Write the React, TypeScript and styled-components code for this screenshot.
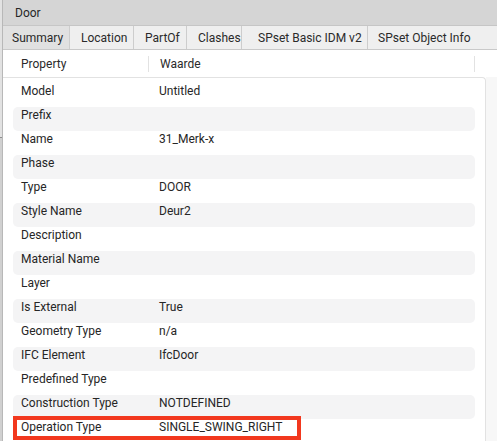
import React from "react";
import styled, { createGlobalStyle } from "styled-components";

const GlobalStyle = createGlobalStyle`
  html, body { margin: 0; padding: 0; background: #ffffff; }
  body {
    font-family: Roboto, "Liberation Sans", Arial, sans-serif;
    font-size: 12px;
    color: #262626;
  }
  * { box-sizing: border-box; }
`;

const Screen = styled.div`
  display: flex;
  width: 497px;
  height: 441px;
  overflow: hidden;
`;

const LeftEdge = styled.div`
  width: 3px;
  flex: none;
  border-right: 1px solid #b8b8b8;
  background: linear-gradient(
    to bottom,
    #e2e2e2 0,
    #e2e2e2 137px,
    #8e8e8e 137px,
    #8e8e8e 138px,
    #d0d0d0 138px
  );
`;

const Panel = styled.div`
  flex: 1;
  min-width: 0;
  display: flex;
  flex-direction: column;
  background: #ffffff;
`;

const TitleBar = styled.div`
  height: 25px;
  flex: none;
  display: flex;
  align-items: center;
  padding-left: 12px;
  background: #d5d5d5;
  color: #262626;
  font-size: 12px;
`;

const TabBar = styled.div`
  height: 25px;
  flex: none;
  display: flex;
  border-top: 1px solid #c6c6c6;
  border-bottom: 1px solid #c9c9c9;
  background: #efefef;
`;

const Tab = styled.div<{ $w?: number; $pl: number; $active?: boolean; $last?: boolean }>`
  ${(p) => (p.$w ? `width: ${p.$w}px; flex: none;` : `flex: 1;`)}
  display: flex;
  align-items: center;
  padding-left: ${(p) => p.$pl}px;
  white-space: nowrap;
  color: #2a2a2a;
  background: ${(p) => (p.$active ? "#e1e1e1" : "transparent")};
  border-right: ${(p) => (p.$last ? "none" : "1px solid #cdcdcd")};
`;

const HeaderRow = styled.div`
  height: 27px;
  flex: none;
  display: grid;
  grid-template-columns: 127px 326px 1fr;
  padding-left: 18px;
  align-items: center;
  color: #2a2a2a;
`;

const HeaderCell = styled.div<{ $divider?: boolean }>`
  position: relative;
  height: 100%;
  display: flex;
  align-items: center;
  padding-left: ${(p) => (p.$divider ? 12 : 0)}px;
  ${(p) =>
    p.$divider
      ? `&::before {
          content: "";
          position: absolute;
          left: 0;
          top: 6px;
          width: 1px;
          height: 16px;
          background: #e2e2e2;
        }`
      : ""}
`;

const Body = styled.div`
  flex: 1;
  min-height: 0;
  display: flex;
`;

const TableBody = styled.div`
  flex: 1;
  min-width: 0;
  border-top: 1px solid #e2e2e2;
  border-right: 1px solid #e2e2e2;
  border-top-right-radius: 4px;
  padding: 5px 10px 0 10px;
  overflow: hidden;
`;

const Gutter = styled.div`
  width: 11px;
  flex: none;
  background: #f7f7f7;
`;

const Row = styled.div<{ $striped?: boolean }>`
  position: relative;
  height: 24px;
  display: grid;
  grid-template-columns: 138px 1fr;
  padding: 1px 0 0 8px;
  line-height: 14px;
  border-radius: 5px;
  background: ${(p) => (p.$striped ? "#f4f4f5" : "transparent")};
  color: #262626;
  white-space: nowrap;
`;

const Highlight = styled.div`
  position: absolute;
  left: 0;
  top: -3px;
  width: 288px;
  height: 24px;
  border: 4px solid #f2381e;
  pointer-events: none;
`;

const tabs = [
  { label: "Summary", w: 67, pl: 9, active: true },
  { label: "Location", w: 64, pl: 11 },
  { label: "PartOf", w: 53, pl: 11 },
  { label: "Clashes", w: 55, pl: 11 },
  { label: "SPset Basic IDM v2", w: 126, pl: 16 },
  { label: "SPset Object Info", pl: 10, last: true },
];

const rows: [string, string][] = [
  ["Model", "Untitled"],
  ["Prefix", ""],
  ["Name", "31_Merk-x"],
  ["Phase", ""],
  ["Type", "DOOR"],
  ["Style Name", "Deur2"],
  ["Description", ""],
  ["Material Name", ""],
  ["Layer", ""],
  ["Is External", "True"],
  ["Geometry Type", "n/a"],
  ["IFC Element", "IfcDoor"],
  ["Predefined Type", ""],
  ["Construction Type", "NOTDEFINED"],
  ["Operation Type", "SINGLE_SWING_RIGHT"],
];

export default function App() {
  return (
    <>
      <GlobalStyle />
      <Screen>
        <LeftEdge />
        <Panel>
          <TitleBar>Door</TitleBar>
          <TabBar>
            {tabs.map((t) => (
              <Tab key={t.label} $w={t.w} $pl={t.pl} $active={t.active} $last={t.last}>
                {t.label}
              </Tab>
            ))}
          </TabBar>
          <HeaderRow>
            <HeaderCell>Property</HeaderCell>
            <HeaderCell $divider>Waarde</HeaderCell>
            <HeaderCell $divider />
          </HeaderRow>
          <Body>
            <TableBody>
              {rows.map(([k, v], i) => (
                <Row key={k} $striped={i % 2 === 1}>
                  <span>{k}</span>
                  <span>{v}</span>
                  {k === "Operation Type" && <Highlight />}
                </Row>
              ))}
            </TableBody>
            <Gutter />
          </Body>
        </Panel>
      </Screen>
    </>
  );
}
